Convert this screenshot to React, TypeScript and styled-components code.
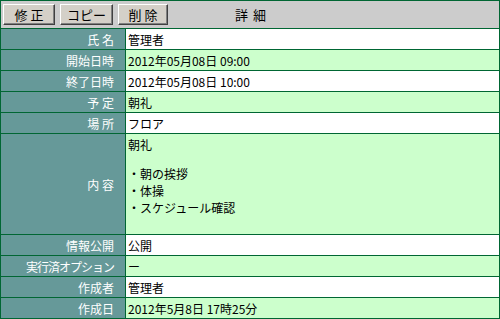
import React from "react";
import styled, { createGlobalStyle } from "styled-components";

const Global = createGlobalStyle`
  html, body { margin: 0; padding: 0; background: #ffffff; }
  body { font-family: "Noto Sans CJK JP", "Liberation Sans", sans-serif; font-size: 12px; }
`;

const Sheet = styled.div`
  width: 500px;
  box-sizing: border-box;
  display: grid;
  grid-template-columns: 124px 1fr;
  gap: 1px;
  padding: 1px;
  background: #006633;
`;

const Header = styled.div`
  grid-column: 1 / -1;
  height: 27px;
  box-sizing: border-box;
  background: #cccccc;
  display: flex;
  align-items: center;
  padding: 0 0 0 2px;
  gap: 5px;
`;

const Button = styled.button<{ $w: number }>`
  width: ${(p) => p.$w}px;
  height: 21px;
  box-sizing: border-box;
  margin: 0;
  padding: 0;
  background: #d4d0c8;
  color: #000;
  font-family: "Noto Sans CJK JP", "Liberation Sans", sans-serif;
  font-size: 13px;
  line-height: 1;
  border-style: solid;
  border-width: 1px;
  border-color: #ffffff #404040 #404040 #ffffff;
  box-shadow: inset -1px -1px 0 #808080;
  display: flex;
  align-items: center;
  justify-content: center;
`;

const Title = styled.div`
  margin-left: 62px;
  font-size: 13px;
  color: #000;
  letter-spacing: 1px;
`;

const Label = styled.div<{ $tall?: boolean; $tight?: boolean }>`
  background: #669999;
  color: #ffffff;
  height: ${(p) => (p.$tall ? 100 : 20)}px;
  box-sizing: border-box;
  display: flex;
  align-items: center;
  justify-content: flex-end;
  padding-right: 11px;
  font-size: 12px;
  letter-spacing: ${(p) => (p.$tight ? "-1px" : "0")};
  white-space: nowrap;
`;

const Value = styled.div<{ $alt: boolean; $tall?: boolean }>`
  background: ${(p) => (p.$alt ? "#ccffcc" : "#ffffff")};
  color: #000;
  height: ${(p) => (p.$tall ? 100 : 20)}px;
  box-sizing: border-box;
  display: flex;
  align-items: ${(p) => (p.$tall ? "flex-start" : "center")};
  padding-left: 2px;
  font-size: 12px;
  white-space: nowrap;
`;

const Lines = styled.div`
  display: flex;
  flex-direction: column;
  padding-top: 2px;
  line-height: 17px;
`;

const Gap = styled.div`
  height: 12px;
`;

const rows: { label: string; value: string; tight?: boolean }[] = [
  { label: "氏 名", value: "管理者" },
  { label: "開始日時", value: "2012年05月08日 09:00" },
  { label: "終了日時", value: "2012年05月08日 10:00" },
  { label: "予 定", value: "朝礼" },
  { label: "場 所", value: "フロア" },
];

const rows2: { label: string; value: string; tight?: boolean }[] = [
  { label: "情報公開", value: "公開" },
  { label: "実行済オプション", value: "ー", tight: true },
  { label: "作成者", value: "管理者" },
  { label: "作成日", value: "2012年5月8日 17時25分" },
];

export default function App() {
  return (
    <>
      <Global />
      <Sheet>
        <Header>
          <Button $w={52}>修 正</Button>
          <Button $w={53}>コピー</Button>
          <Button $w={50}>削 除</Button>
          <Title>詳 細</Title>
        </Header>
        {rows.map((r, i) => (
          <React.Fragment key={r.label}>
            <Label $tight={r.tight}>{r.label}</Label>
            <Value $alt={i % 2 === 1}>{r.value}</Value>
          </React.Fragment>
        ))}
        <Label $tall>内 容</Label>
        <Value $alt $tall>
          <Lines>
            <span>朝礼</span>
            <Gap />
            <span>・朝の挨拶</span>
            <span>・体操</span>
            <span>・スケジュール確認</span>
          </Lines>
        </Value>
        {rows2.map((r, i) => (
          <React.Fragment key={r.label}>
            <Label $tight={r.tight}>{r.label}</Label>
            <Value $alt={i % 2 === 1}>{r.value}</Value>
          </React.Fragment>
        ))}
      </Sheet>
    </>
  );
}
